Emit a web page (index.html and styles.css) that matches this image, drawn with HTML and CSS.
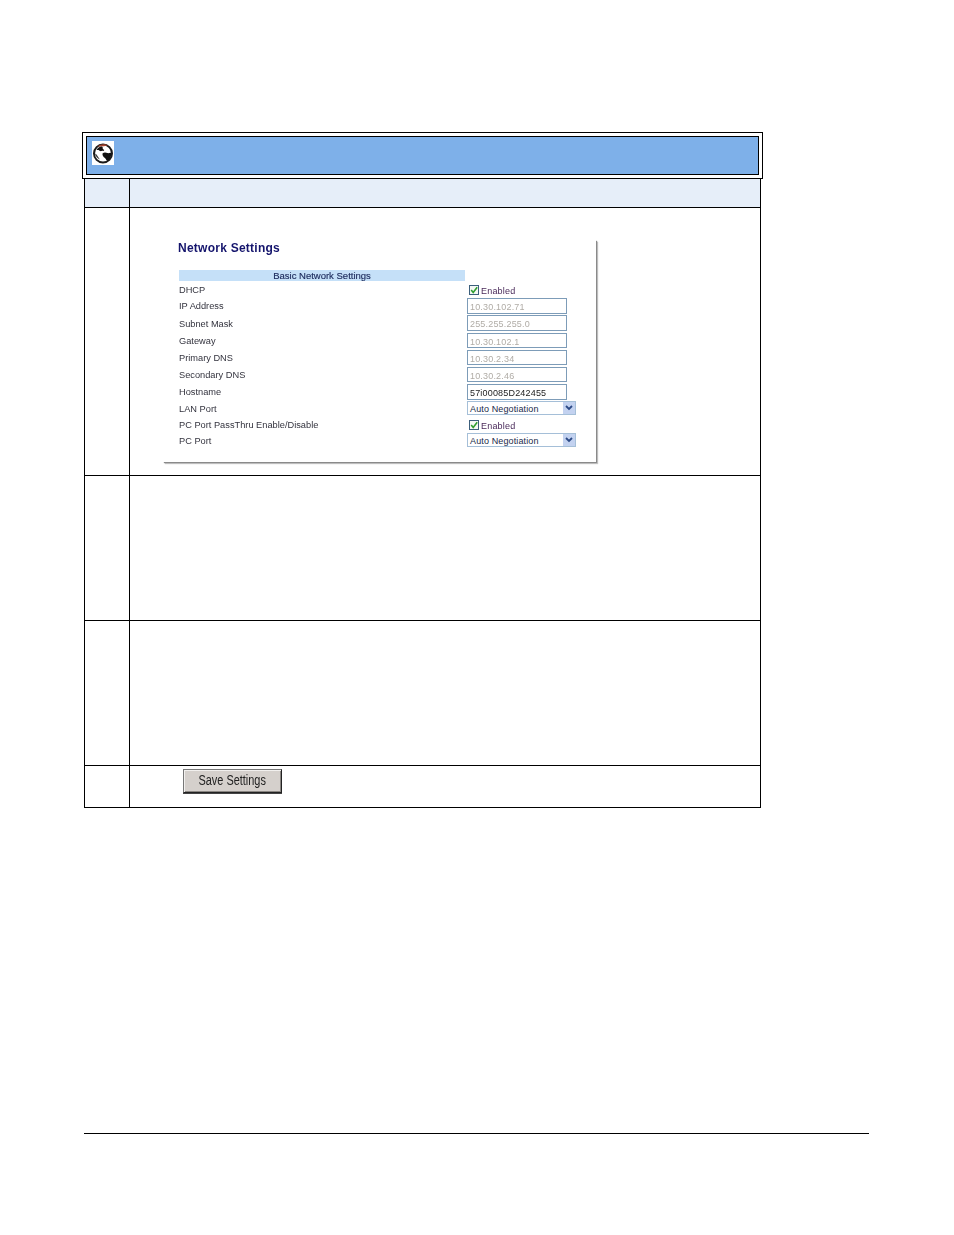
FILE: index.html
```html
<!DOCTYPE html>
<html lang="en">
<head>
<meta charset="utf-8">
<title>Network Settings</title>
<link rel="stylesheet" href="styles.css">
</head>
<body>
<div class="page">
  <div class="banner-frame">
    <div class="banner">
      <span class="globe">
        <svg viewBox="0 0 22 24" width="22" height="24" aria-hidden="true">
          <rect width="22" height="24" fill="#fff"/>
          <circle cx="11" cy="12.500" r="9" fill="#fff" stroke="#1a1a1a" stroke-width="2"/>
          <path d="M5.500 5.500c2.500-2.200 7-3 10.500-1.200l-4 .9-3.500.3z" fill="#a8452f"/>
          <path d="M4.500 9c1-1.800 2.600-3.300 4.500-3.500 1.300-.1 2 .6 1.700 1.400-.3 1 .7 1.100 1.300 1.900.5.8-.4 1.400-1.400 1-1-.3-1.400.5-2.300.3-1-.3-.9-1.100-1.800-1.200-.7 0-1.300.2-2 .1z" fill="#161212"/>
          <path d="M10.500 12.500c1.300-1.200 3.500-1 4.800-.4 1.400.3 2.600-.4 3.700-.2.400 3-.5 5.800-2.600 7.800-1.300.2-2.200-.4-2.600-1.600-.4-1.300-1.600-1.300-2.300-2.400-.7-1-1.200-2-1-3.200z" fill="#111"/>
          <path d="M3 12.500c1.400.6 2.300 1.800 2.900 3.100.5 1.100 1.500 1.900 1.900 3-2.300-1-4.300-3.300-4.800-6.100z" fill="#3a3a3a"/>
        </svg>
      </span>
    </div>
  </div>
  <div class="steps">
    <div class="step step-head"><div class="num"></div><div class="body"></div></div>
    <div class="step step-shot">
      <div class="num"></div>
      <div class="body">
        <div class="panel">
          <h2 class="panel-title">Network Settings</h2>
          <div class="section-bar">Basic Network Settings</div>
          <div class="row row-check"><span class="label">DHCP</span><span class="value"><span class="check"><svg viewBox="0 0 10 10" width="8" height="8" aria-hidden="true"><path d="M1.500 5l2.500 3 5-6.500" fill="none" stroke="#2f9e2f" stroke-width="2"/></svg></span>Enabled</span></div>
          <div class="row"><span class="label">IP Address</span><span class="input off">10.30.102.71</span></div>
          <div class="row"><span class="label">Subnet Mask</span><span class="input off">255.255.255.0</span></div>
          <div class="row"><span class="label">Gateway</span><span class="input off">10.30.102.1</span></div>
          <div class="row"><span class="label">Primary DNS</span><span class="input off">10.30.2.34</span></div>
          <div class="row"><span class="label">Secondary DNS</span><span class="input off">10.30.2.46</span></div>
          <div class="row"><span class="label">Hostname</span><span class="input">57i00085D242455</span></div>
          <div class="row row-select"><span class="label">LAN Port</span><span class="select">Auto Negotiation<span class="arrow"><svg viewBox="0 0 8 6" width="8" height="6" aria-hidden="true"><path d="M1 1l3 3 3-3" fill="none" stroke="#2c4a86" stroke-width="1.800"/></svg></span></span></div>
          <div class="row row-thru"><span class="label">PC Port PassThru Enable/Disable</span><span class="value"><span class="check"><svg viewBox="0 0 10 10" width="8" height="8" aria-hidden="true"><path d="M1.500 5l2.500 3 5-6.500" fill="none" stroke="#2f9e2f" stroke-width="2"/></svg></span>Enabled</span></div>
          <div class="row row-select"><span class="label">PC Port</span><span class="select">Auto Negotiation<span class="arrow"><svg viewBox="0 0 8 6" width="8" height="6" aria-hidden="true"><path d="M1 1l3 3 3-3" fill="none" stroke="#2c4a86" stroke-width="1.800"/></svg></span></span></div>
        </div>
      </div>
    </div>
    <div class="step step-text"><div class="num"></div><div class="body"></div></div>
    <div class="step step-text"><div class="num"></div><div class="body"></div></div>
    <div class="step step-save"><div class="num"></div><div class="body"><span class="save"><span class="save-text">Save Settings</span></span></div></div>
  </div>
  <div class="footer-rule"></div>
</div>
</body>
</html>
```
FILE: styles.css
```css
html, body { margin: 0; padding: 0; background: #fff; }
body { font-family: "Liberation Sans", Arial, sans-serif; }
.page { width: 954px; height: 1235px; padding-top: 132px; box-sizing: border-box; overflow: hidden; }

.banner-frame { margin-left: 82px; width: 681px; height: 47px; box-sizing: border-box; border: 1px solid #000; padding: 3px; }
.banner { height: 39px; box-sizing: border-box; background: #7eb0e9; border: 1px solid #000; border-width: 1px 1px 1.500px 1px; padding: 4px 0 0 5px; }
.globe { display: block; width: 22px; height: 24px; }
.globe svg { display: block; filter: blur(.35px); }

.steps { margin-left: 84px; width: 677px; box-sizing: border-box; border: solid #000; border-width: 0 1px 1px 1px; }
.step { display: flex; border-bottom: 1px solid #000; box-sizing: border-box; }
.step:last-child { border-bottom: 0; }
.num { width: 44px; flex: none; border-right: 1px solid #000; }
.body { flex: 1; min-width: 0; }
.step-head { height: 29px; background: #e6eef9; }
.step-shot { height: 268px; }
.step-text { height: 145px; }
.step-save { height: 41px; }

.panel { width: 433px; height: 222px; margin: 32px 0 0 33px; box-sizing: border-box; padding: 0 0 0 15px; background: #fff; box-shadow: 1px 1px 1px #8a8a8a, 2px 2px 1px #c8c8c8; font-size: 9.250px; color: #33333e; filter: blur(.3px); }
.panel-title { margin: 0; padding: 1px 0 0 0; height: 30px; box-sizing: border-box; font-size: 12px; line-height: 14px; font-weight: bold; color: #14146c; letter-spacing: .25px; }
.section-bar { margin-left: 1px; width: 286px; height: 11px; background: #c5e0f8; text-align: center; font-size: 9.500px; line-height: 12px; color: #1c2a5c; -webkit-text-stroke: .15px #1c2a5c; }

.row { display: flex; align-items: center; height: 17.200px; margin-left: 1px; }
.label { width: 288px; flex: none; padding-top: 1px; box-sizing: border-box; }
.row-check { height: 16.300px; }
.row-select { height: 16px; }
.row-thru { height: 15.700px; }
.value { display: flex; align-items: center; padding: 4px 0 0 2px; font-size: 9px; color: #4a2a5a; letter-spacing: .2px; }
.check { display: flex; align-items: center; justify-content: center; width: 10px; height: 10px; box-sizing: border-box; border: 1px solid #3c5f7c; background: #f4f8f4; margin: -3px 2px 0 0; }

.input { width: 100px; height: 15.500px; box-sizing: border-box; border: 1px solid #7d9cb8; background: #fff; line-height: 16px; padding-left: 2px; font-size: 9px; letter-spacing: .18px; color: #222; }
.input.off { color: #b0aca6; }
.select { position: relative; display: block; width: 109px; height: 14px; box-sizing: border-box; border: 1px solid #a5bfd8; background: #fff; line-height: 14px; padding-left: 2px; font-size: 9px; letter-spacing: .13px; color: #1a2a4a; }
.arrow { position: absolute; right: 0; top: 0; width: 12px; height: 12px; background: #c3d2f0; display: flex; align-items: center; justify-content: center; }

.save { display: block; width: 99px; height: 24px; margin: 3px 0 0 53px; box-sizing: border-box; background: #d5d0cc; border: 1px solid; border-color: #777 #222 #222 #777; box-shadow: inset 1px 1px 0 #f2f0ee, inset -1px -1px 0 #8a8682, 0 1px 0 #444; text-align: center; font-size: 14px; line-height: 20px; color: #222; }
.save-text { display: inline-block; transform: scaleX(.78); white-space: nowrap; }

.footer-rule { margin: 325px 0 0 84px; width: 785px; height: 1px; background: #000; }
```
